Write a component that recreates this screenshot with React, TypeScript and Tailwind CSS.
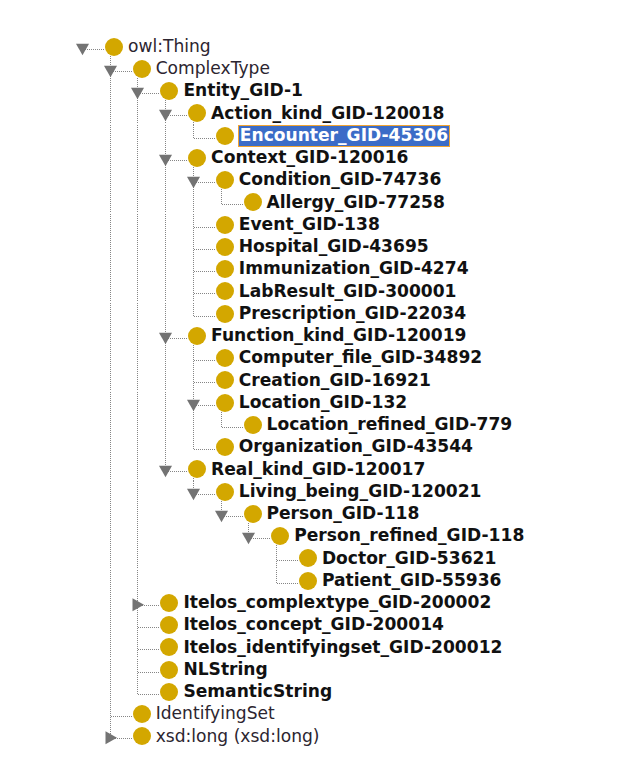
import React from "react";

type Kind = "open" | "closed" | "leaf";
type Node = { label: string; depth: number; kind: Kind; bold: boolean; selected?: boolean };

const raw: [string, number, Kind, boolean, boolean?][] = [
  ["owl:Thing", 0, "open", false],
  ["ComplexType", 1, "open", false],
  ["Entity_GID-1", 2, "open", true],
  ["Action_kind_GID-120018", 3, "open", true],
  ["Encounter_GID-45306", 4, "leaf", true, true],
  ["Context_GID-120016", 3, "open", true],
  ["Condition_GID-74736", 4, "open", true],
  ["Allergy_GID-77258", 5, "leaf", true],
  ["Event_GID-138", 4, "leaf", true],
  ["Hospital_GID-43695", 4, "leaf", true],
  ["Immunization_GID-4274", 4, "leaf", true],
  ["LabResult_GID-300001", 4, "leaf", true],
  ["Prescription_GID-22034", 4, "leaf", true],
  ["Function_kind_GID-120019", 3, "open", true],
  ["Computer_file_GID-34892", 4, "leaf", true],
  ["Creation_GID-16921", 4, "leaf", true],
  ["Location_GID-132", 4, "open", true],
  ["Location_refined_GID-779", 5, "leaf", true],
  ["Organization_GID-43544", 4, "leaf", true],
  ["Real_kind_GID-120017", 3, "open", true],
  ["Living_being_GID-120021", 4, "open", true],
  ["Person_GID-118", 5, "open", true],
  ["Person_refined_GID-118", 6, "open", true],
  ["Doctor_GID-53621", 7, "leaf", true],
  ["Patient_GID-55936", 7, "leaf", true],
  ["Itelos_complextype_GID-200002", 2, "closed", true],
  ["Itelos_concept_GID-200014", 2, "leaf", true],
  ["Itelos_identifyingset_GID-200012", 2, "leaf", true],
  ["NLString", 2, "leaf", true],
  ["SemanticString", 2, "leaf", true],
  ["IdentifyingSet", 1, "leaf", false],
  ["xsd:long (xsd:long)", 1, "closed", false],
];

const nodes: Node[] = raw.map(([label, depth, kind, bold, selected]) => ({ label, depth, kind, bold, selected }));

const isLast = nodes.map((n, i) => {
  for (let k = i + 1; k < nodes.length; k++) {
    if (nodes[k].depth < n.depth) return true;
    if (nodes[k].depth === n.depth) return false;
  }
  return true;
});

const continues: boolean[][] = [];
{
  const chainLast: boolean[] = [];
  nodes.forEach((n, i) => {
    chainLast[n.depth] = isLast[i];
    const arr: boolean[] = [];
    for (let j = 1; j < n.depth; j++) arr[j] = !chainLast[j];
    continues.push(arr);
  });
}

const ROW = 22.26;
const INDENT = 27.7;
const X0 = 22;
const HY = ROW / 2 + 1.5;
const LINE = "#858585";
const GAP = 23; // from xd to circle left edge

function Connectors({ i }: { i: number }) {
  const n = nodes[i];
  const xd = X0 + n.depth * INDENT;
  const w = xd + GAP;
  const lines: React.ReactNode[] = [];
  for (let j = 1; j < n.depth; j++) {
    if (continues[i][j]) {
      const x = Math.round(X0 + j * INDENT) + 0.5;
      lines.push(<line key={"v" + j} x1={x} x2={x} y1={0} y2={ROW} />);
    }
  }
  const xr = Math.round(xd) + 0.5;
  const hy = Math.round(HY) + 0.5;
  if (n.depth >= 1) {
    lines.push(<line key="own" x1={xr} x2={xr} y1={0} y2={isLast[i] ? hy : ROW} />);
  }
  lines.push(<line key="h" x1={xr} x2={w} y1={hy} y2={hy} />);
  return (
    <svg width={w} height={ROW} className="shrink-0 overflow-visible" shapeRendering="crispEdges">
      <g stroke={LINE} strokeWidth={1} strokeDasharray="1 1">{lines}</g>
      {n.kind === "open" && (
        <polygon
          points={`${xr - 6.5},${HY - 5} ${xr + 6.5},${HY - 5} ${xr},${HY + 6.5}`}
          fill="#737373"
          shapeRendering="geometricPrecision"
        />
      )}
      {n.kind === "closed" && (
        <polygon
          points={`${xr - 5},${HY - 6.5} ${xr - 5},${HY + 6.5} ${xr + 6.5},${HY}`}
          fill="#737373"
          shapeRendering="geometricPrecision"
        />
      )}
    </svg>
  );
}

export default function App() {
  return (
    <div
      className="min-h-screen w-full bg-white pl-[60px] pt-[35.5px]"
      style={{ fontFamily: '"DejaVu Sans", sans-serif' }}
    >
      {nodes.map((n, i) => {
        const xd = X0 + n.depth * INDENT;
        const childX = Math.round(X0 + (n.depth + 1) * INDENT) + 0.5;
        return (
          <div key={i} className="flex items-center h-[22.26px] whitespace-nowrap">
            <Connectors i={i} />
            <div className="relative w-[18px] h-[18px] shrink-0">
              <div className="w-[18px] h-[18px] rounded-full bg-[#d3a700]" />
              {n.kind === "open" && (
                <svg
                  className="absolute top-[18px] overflow-visible"
                  style={{ left: childX - (xd + GAP) - 0.5 }}
                  width={1}
                  height={4}
                  shapeRendering="crispEdges"
                >
                  <line x1={0.5} x2={0.5} y1={0} y2={4} stroke={LINE} strokeDasharray="1 1" />
                </svg>
              )}
            </div>
            {n.selected ? (
              <span className="ml-[4px] h-[22px] flex items-center px-[1px] bg-[#3b6cc7] border border-[#f2a431] text-white font-bold text-[17.1px]">
                {n.label}
              </span>
            ) : (
              <span
                className={
                  "ml-[5px] text-[17.1px] " +
                  (n.bold ? "font-bold text-[#111111]" : "font-normal text-[#2c2530]")
                }
              >
                {n.label}
              </span>
            )}
          </div>
        );
      })}
    </div>
  );
}
